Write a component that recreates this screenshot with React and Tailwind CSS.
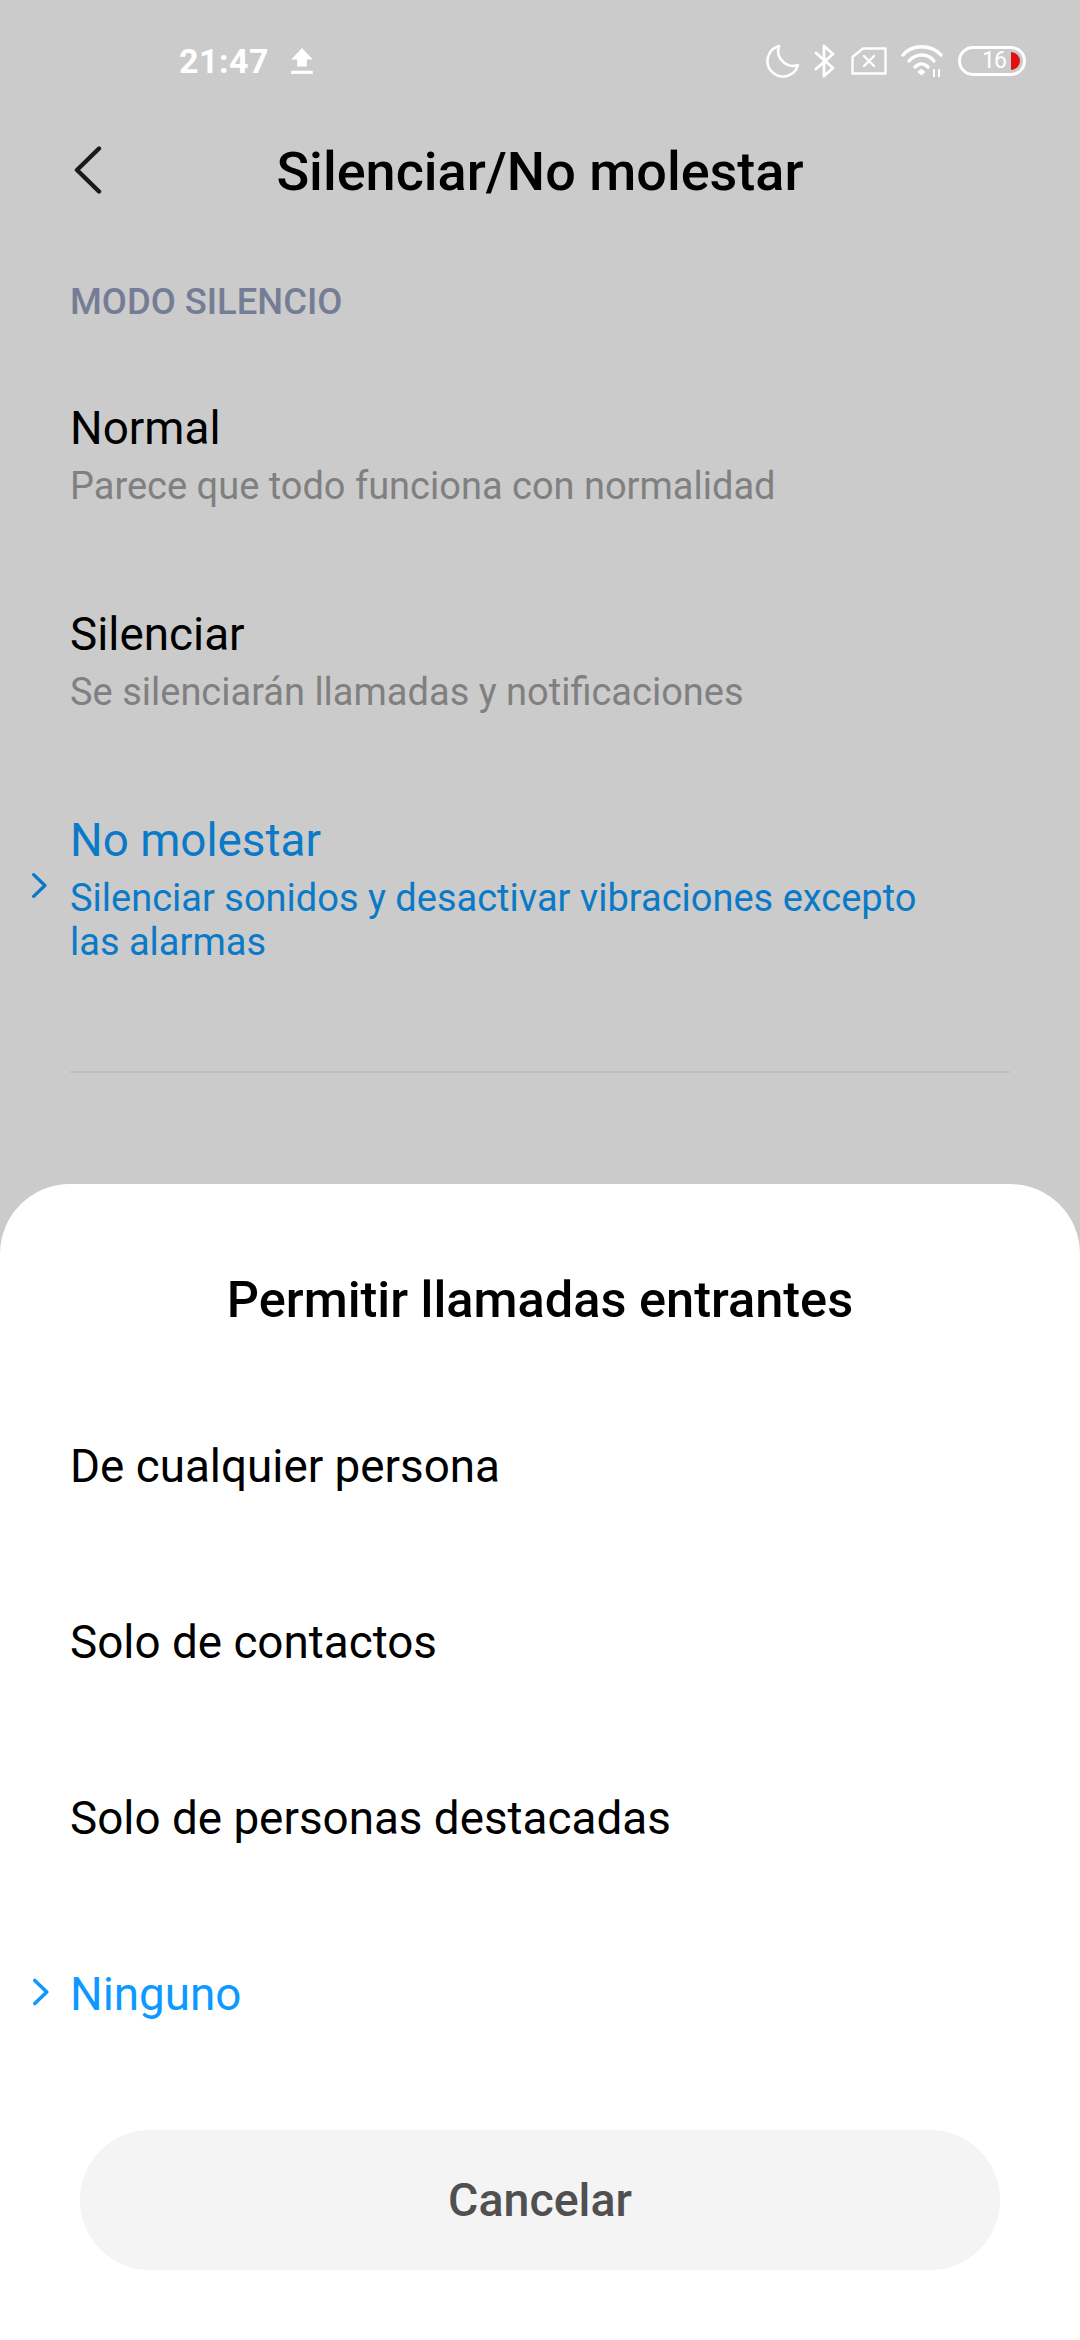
import React from 'react';

const Chevron = ({ className }) => (
  <svg viewBox="0 0 18 30" className={className} fill="none" stroke="currentColor" strokeWidth="4" strokeLinecap="round" strokeLinejoin="round">
    <path d="M2 2 L15.5 15 L2 28" />
  </svg>
);

const StatusIcons = () => (
  <div className="flex items-center text-white">
    <svg viewBox="0 0 34 34" className="w-[34px] h-[34px]" fill="none" stroke="currentColor" strokeWidth="2.6" strokeLinejoin="round">
      <path d="M13 2 A15.5 15.5 0 1 0 32 21 A15 15 0 0 1 13 2 Z" />
    </svg>
    <svg viewBox="0 0 22 34" className="w-[22px] h-[34px] ml-[14px]" fill="none" stroke="currentColor" strokeWidth="2.8" strokeLinejoin="round" strokeLinecap="round">
      <path d="M2 9 L19 24 L10 32 L10 2 L19 10 L2 25" />
    </svg>
    <svg viewBox="0 0 36 28" className="w-[36px] h-[28px] ml-[15px]" fill="none" stroke="currentColor" strokeWidth="2.4" strokeLinejoin="round" strokeLinecap="round">
      <path d="M12 1.5 H34.5 V26.5 H1.5 V10 Z" />
      <path d="M13 9 L23 19 M23 9 L13 19" />
    </svg>
    <svg viewBox="0 0 44 32" className="w-[44px] h-[32px] ml-[14px]" fill="none" stroke="currentColor" strokeWidth="3.4" strokeLinecap="round">
      <path d="M2 10 C11 -1 30 -1 40 10" />
      <path d="M8 16 C15 8 27 8 33 16" />
      <path d="M14 22 C18 18 23 18 27 22" />
      <path d="M17 27 L20.5 30 L24 27 L20.5 24.5 Z" fill="currentColor" strokeWidth="1" />
      <path d="M33 32 V25 M38 32 V25" strokeWidth="2" />
    </svg>
    <div className="relative flex items-center w-[68px] h-[30px] ml-[13px] rounded-full border-[3px] border-white">
      <span className="absolute left-[21px] top-[-3px] text-[23px] leading-[30px] tracking-[-1px] text-white font-['Roboto',sans-serif]">16</span>
      <div className="absolute right-[3px] top-[3px] w-[9px] h-[18px] bg-[#e01010] rounded-r-full" />
    </div>
  </div>
);

const ModeRow = ({ title, sub, active }) => (
  <div className="relative pl-[70px] pr-[130px] mb-[97px]">
    {active && <Chevron className="absolute left-[32px] top-[60px] w-[15px] h-[29px] text-[#0a7ac8]" />}
    <div className={`text-[45.8px] leading-[60px] ${active ? 'text-[#0a7ac8]' : 'text-black'}`}>{title}</div>
    <div className={`text-[38px] leading-[44px] mt-[5px] ${active ? 'text-[#0a7ac8]' : 'text-[#808080]'}`}>{sub}</div>
  </div>
);

const OptionRow = ({ label, active }) => (
  <div className="relative h-[176px] flex items-center pl-[70px]">
    {active && <Chevron className="absolute left-[33px] top-[71px] w-[16px] h-[28px] text-[#0d99ff]" />}
    <span className={`text-[45.8px] ${active ? 'text-[#0d99ff]' : 'text-black'}`}>{label}</span>
  </div>
);

export default function App() {
  return (
    <div className="h-[2340px] w-[1080px] flex flex-col bg-[#cbcbcb] overflow-hidden font-['Roboto',sans-serif]">
      {/* Page behind the sheet */}
      <div className="h-[1184px] shrink-0">
        <div className="h-[122px] flex items-center justify-between pl-[179px] pr-[54px]">
          <div className="flex items-center text-white">
            <span className="text-[34px] font-bold tracking-[0.5px]">21:47</span>
            <svg viewBox="0 0 22 26" className="w-[24px] h-[28px] ml-[21px]" fill="currentColor">
              <path d="M11 1 L21 11.5 H15.5 V18 H6.5 V11.5 H1 Z" />
              <rect x="1" y="22" width="20" height="3" />
            </svg>
          </div>
          <StatusIcons />
        </div>

        <div className="relative h-[98px] flex items-center justify-center">
          <svg viewBox="0 0 28 48" className="absolute left-[74px] top-[24px] w-[28px] h-[48px] text-[#1a1a1a]" fill="none" stroke="currentColor" strokeWidth="4.4" strokeLinecap="round" strokeLinejoin="round">
            <path d="M25 2.5 L3 24 L25 45.5" />
          </svg>
          <h1 className="text-[54px] font-medium text-black">Silenciar/No molestar</h1>
        </div>

        <div className="mt-[59px] pl-[70px] text-[36.4px] leading-[46px] font-medium text-[#757d96]">MODO SILENCIO</div>

        <div className="mt-[74px]">
          <ModeRow title="Normal" sub="Parece que todo funciona con normalidad" />
          <ModeRow title="Silenciar" sub="Se silenciarán llamadas y notificaciones" />
          <ModeRow active title="No molestar" sub="Silenciar sonidos y desactivar vibraciones excepto las alarmas" />
        </div>

        {/* margin collapses with the last row's mb */}
        <div className="h-[2px] mx-[70px] mt-[107px] bg-[#bfbfbf]" />
      </div>

      {/* Bottom sheet */}
      <div className="flex-1 bg-white rounded-t-[70px] flex flex-col">
        <h2 className="mt-[88px] text-center text-[50.5px] leading-[56px] font-medium text-black">Permitir llamadas entrantes</h2>
        <div className="mt-[51px]">
          <OptionRow label="De cualquier persona" />
          <OptionRow label="Solo de contactos" />
          <OptionRow label="Solo de personas destacadas" />
          <OptionRow active label="Ninguno" />
        </div>
        <button className="mx-[80px] mt-[47px] pt-[2px] h-[140px] rounded-full bg-[#f4f4f4] text-[46.5px] font-medium text-[#505050]">Cancelar</button>
      </div>
    </div>
  );
}
